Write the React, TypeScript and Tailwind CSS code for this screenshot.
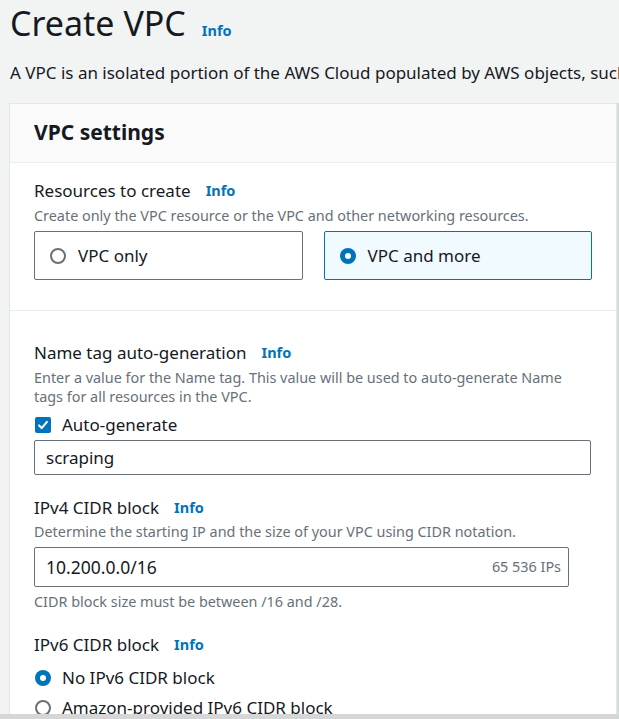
function Info({ className = '' }: { className?: string }) {
  return <span className={`text-[14.5px] font-bold text-[#0073bb] ${className}`}>Info</span>;
}

function Radio({ checked }: { checked?: boolean }) {
  return checked ? (
    <span className="w-4 h-4 rounded-full bg-[#0073bb] flex items-center justify-center shrink-0">
      <span className="w-[6px] h-[6px] rounded-full bg-white" />
    </span>
  ) : (
    <span className="w-4 h-4 rounded-full border-2 border-[#687078] shrink-0" />
  );
}

function Label({ text, className = '' }: { text: string; className?: string }) {
  return (
    <div className={`flex items-center gap-[15px] h-[24px] ${className}`}>
      <span className="text-[17px]">{text}</span>
      <Info />
    </div>
  );
}

export default function App() {
  return (
    <div className="h-[719px] overflow-hidden flex flex-col bg-[#f2f3f3] text-[#16191f] font-['Noto_Sans',sans-serif]">
      <div className="flex-1 overflow-hidden pl-[9px] pr-[2px]">
        <div className="flex items-baseline gap-4 pl-[1px] h-[52px] pt-[1px]">
          <h1 className="text-[34px] leading-[44px]">Create VPC</h1>
          <Info />
        </div>
        <p className="text-[17px] leading-[22px] whitespace-nowrap pt-[10px] pl-[1px]">
          A VPC is an isolated portion of the AWS Cloud populated by AWS objects, such as Amazon EC2 instances.
        </p>
        <div className="mt-[19px] border border-[#e5e7e7] shadow-[2px_0_0_#d5dbdb] bg-white">
          <div className="bg-[#fafafa] border-b border-[#eaeded] h-[59px] flex items-center px-6">
            <h2 className="text-[21px] font-bold">VPC settings</h2>
          </div>
          <div className="px-6 pt-[16px] pb-[30px] border-b border-[#eaeded]">
            <Label text="Resources to create" />
            <p className="text-[14.4px] text-[#687078] leading-[20px] mt-[3px]">
              Create only the VPC resource or the VPC and other networking resources.
            </p>
            <div className="grid grid-cols-2 gap-[21px] mt-[5px]">
              <div className="h-[49px] border border-[#687078] rounded-[2px] flex items-center gap-[12px] px-[15px]">
                <Radio />
                <span className="text-[17px]">VPC only</span>
              </div>
              <div className="h-[49px] border border-[#0073bb] bg-[#f1faff] rounded-[2px] flex items-center gap-[12px] px-[15px]">
                <Radio checked />
                <span className="text-[17px]">VPC and more</span>
              </div>
            </div>
          </div>
          <div className="px-6 pt-[30px]">
            <Label text="Name tag auto-generation" />
            <p className="text-[14.4px] text-[#687078] leading-[19px] mt-[3px]">
              Enter a value for the Name tag. This value will be used to auto-generate Name
              <br />
              tags for all resources in the VPC.
            </p>
            <label className="flex items-center gap-[11px] mt-[7px] h-[24px] pl-[1px]">
              <span className="w-4 h-4 rounded-[2px] bg-[#0073bb] flex items-center justify-center">
                <svg viewBox="0 0 16 16" className="w-[14px] h-[14px]" fill="none" stroke="white" strokeWidth="2.4" strokeLinecap="round" strokeLinejoin="round">
                  <path d="M3.5 8.5l3 3 6-7" />
                </svg>
              </span>
              <span className="text-[17px]">Auto-generate</span>
            </label>
            <div className="mt-[3px] h-[35px] border border-[#687078] rounded-[2px] flex items-center px-[11px] mr-[1px]">
              <span className="text-[17px]">scraping</span>
            </div>

            <Label text="IPv4 CIDR block" className="mt-[21px]" />
            <p className="text-[14.4px] text-[#687078] leading-[20px] mt-[2px]">
              Determine the starting IP and the size of your VPC using CIDR notation.
            </p>
            <div className="mt-[5px] w-[535px] h-[40px] border border-[#687078] rounded-[2px] flex items-center justify-between pl-[11px] pr-[7px]">
              <span className="text-[17.5px]">10.200.0.0/16</span>
              <span className="text-[14.4px] text-[#687078]">65 536 IPs</span>
            </div>
            <p className="text-[14.4px] text-[#687078] leading-[20px] mt-[5px]">
              CIDR block size must be between /16 and /28.
            </p>

            <Label text="IPv6 CIDR block" className="mt-[21px]" />
            <div className="flex items-center gap-[11px] h-[24px] mt-[9px] pl-[1px]">
              <Radio checked />
              <span className="text-[17px]">No IPv6 CIDR block</span>
            </div>
            <div className="flex items-center gap-[11px] h-[24px] mt-[6px] pl-[1px]">
              <Radio />
              <span className="text-[17px]">Amazon-provided IPv6 CIDR block</span>
            </div>
          </div>
        </div>
      </div>
      <div className="h-[5px] bg-[#d6d6d6] shrink-0" />
    </div>
  );
}
